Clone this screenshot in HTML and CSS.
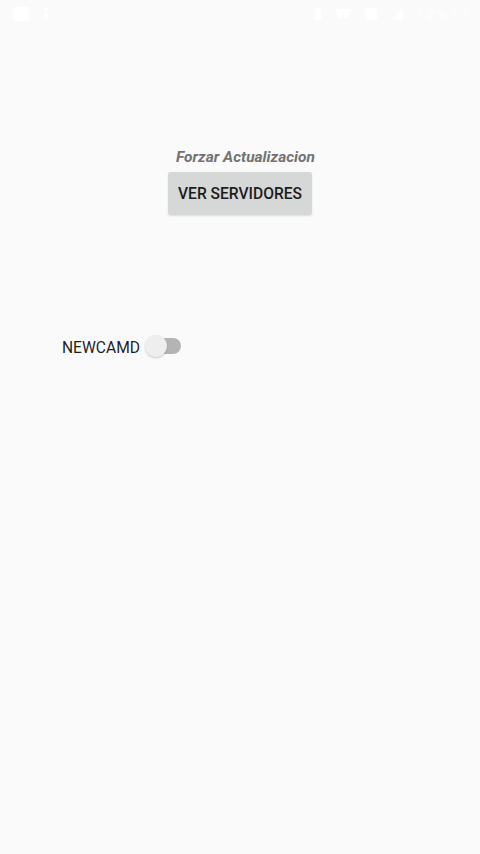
FILE: index.html
```html
<!DOCTYPE html>
<html lang="en">
<head>
  <meta charset="UTF-8" />
  <meta name="viewport" content="width=device-width, initial-scale=1.0"/>
  <title>Servidores</title>
  <link rel="stylesheet" href="styles.css">
</head>
<body>

  <div class="status-bar">
    <div class="status-left">
      <svg width="18" height="16" viewBox="0 0 18 16"><path d="M2 1h14a1 1 0 0 1 1 1v12a1 1 0 0 1-1 1H2a1 1 0 0 1-1-1V2a1 1 0 0 1 1-1z" fill="#ffffff"/></svg>
      <svg width="8" height="14" viewBox="0 0 8 14"><circle cx="4" cy="3" r="2" fill="#ffffff"/><circle cx="4" cy="8" r="2" fill="#ffffff"/><circle cx="4" cy="12.500" r="1.500" fill="#ffffff"/></svg>
    </div>
    <div class="status-right">
      <svg width="8" height="14" viewBox="0 0 8 14"><rect x="1" y="1" width="6" height="12" rx="1" fill="#ffffff"/></svg>
      <svg width="18" height="14" viewBox="0 0 18 14"><path d="M1 2h16l-3 10h-3l-2-6-2 6H4z" fill="#ffffff"/></svg>
      <svg width="14" height="14" viewBox="0 0 14 14"><path d="M1 1h12v12H4l-3-3z" fill="#ffffff"/></svg>
      <svg width="14" height="14" viewBox="0 0 14 14"><path d="M13 1v12H1z" fill="#ffffff"/></svg>
      <span class="status-text">1 2 % 1 7</span>
    </div>
  </div>

  <section class="update-section">
    <p class="update-label">Forzar Actualizacion</p>
    <button class="servers-btn">VER SERVIDORES</button>
  </section>

  <section class="switch-row">
    <span class="switch-label">NEWCAMD</span>
    <div class="switch">
      <div class="switch-track"></div>
      <div class="switch-thumb"></div>
    </div>
  </section>

</body>
</html>
```

FILE: styles.css
```css
* {
  margin: 0;
  padding: 0;
  box-sizing: border-box;
  font-family: Roboto, 'Liberation Sans', sans-serif;
}

body {
  background-color: #fafafa;
  height: 854px;
  overflow: hidden;
}

.status-bar {
  height: 28px;
  padding: 0 12px;
  display: flex;
  justify-content: space-between;
  align-items: center;
}

.status-left,
.status-right {
  display: flex;
  align-items: center;
  gap: 12px;
}

.status-text {
  color: #ffffff;
  font-size: 13px;
}

.update-section {
  margin-top: 120px;
  display: flex;
  flex-direction: column;
  align-items: center;
}

.update-label {
  margin-left: 11px;
  font-size: 15.500px;
  line-height: 18px;
  font-weight: bold;
  font-style: italic;
  color: #737373;
}

.servers-btn {
  width: 144px;
  height: 43px;
  margin-top: 6px;
  background-color: #d6d7d7;
  color: #1c1c1c;
  border: none;
  border-radius: 3px;
  font-size: 15.600px;
  font-weight: 500;
  box-shadow: 0 1px 2px rgba(0, 0, 0, 0.12);
}

.switch-row {
  margin-top: 119px;
  padding-left: 62px;
  display: flex;
  align-items: center;
  gap: 4px;
}

.switch-label {
  padding-top: 3px;
  font-size: 15.600px;
  color: #1f1f1f;
}

.switch {
  position: relative;
  width: 37px;
  height: 24px;
}

.switch-track {
  position: absolute;
  left: 10px;
  top: 4px;
  width: 27px;
  height: 16px;
  border-radius: 8px;
  background-color: #b4b4b4;
}

.switch-thumb {
  position: absolute;
  left: 1px;
  top: 1px;
  width: 22px;
  height: 22px;
  border-radius: 50%;
  background-color: #eeeeee;
  box-shadow: 0 1px 2px rgba(0, 0, 0, 0.2);
}
```
